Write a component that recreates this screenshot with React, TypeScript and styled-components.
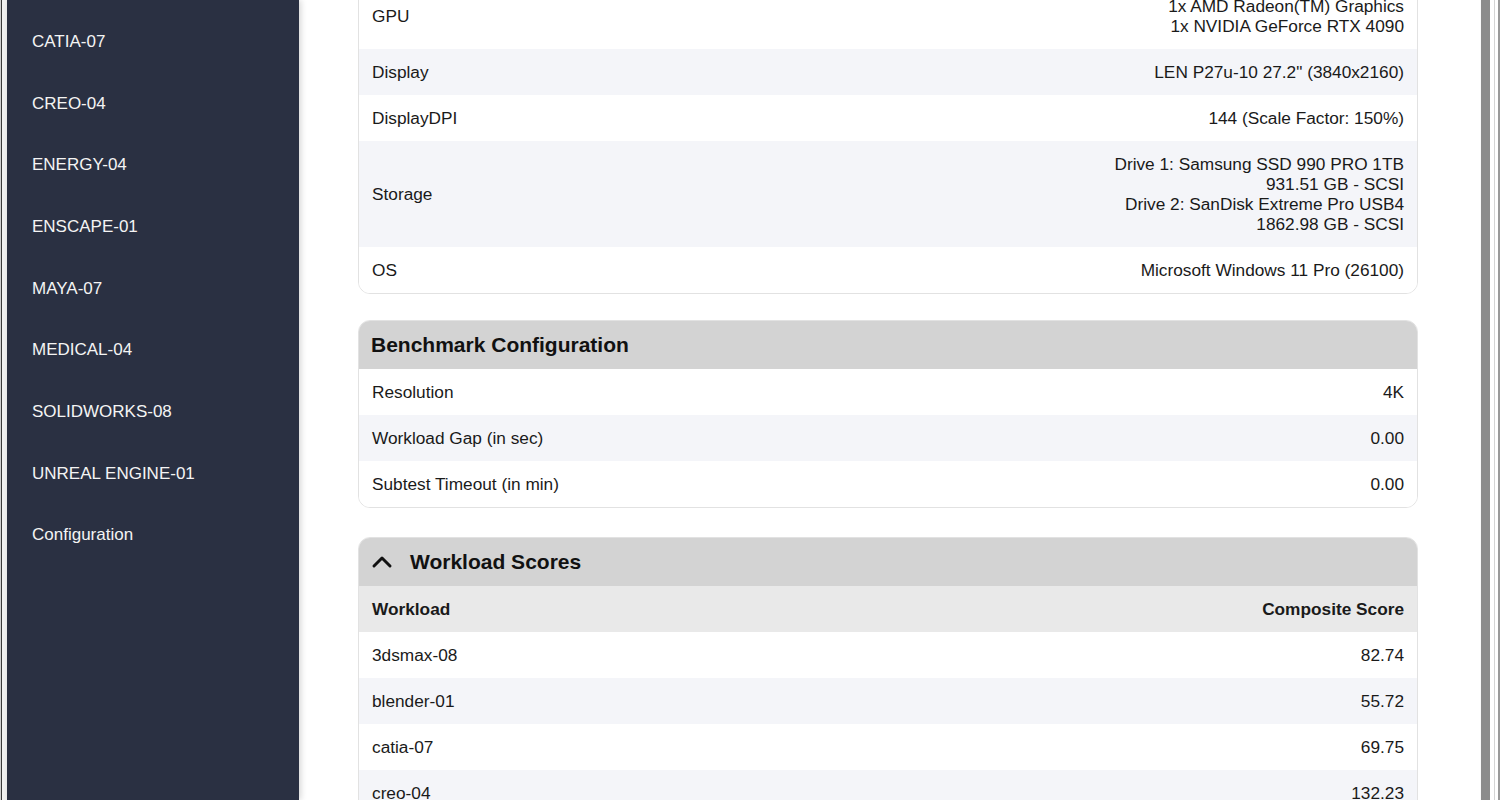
import React from 'react';
import styled, { createGlobalStyle } from 'styled-components';

const GlobalStyle = createGlobalStyle`
  html, body { margin: 0; padding: 0; height: 100%; overflow: hidden; background: #fff; }
  body { font-family: "Liberation Sans", Arial, sans-serif; color: #1f1f1f; }
  * { box-sizing: border-box; }
`;

const Frame = styled.div`
  display: flex;
  width: 1500px;
  height: 800px;
  overflow: hidden;
  background: #fff;
`;

const Strip = styled.div<{ $w: number; $c: string }>`
  flex: 0 0 ${p => p.$w}px;
  background: ${p => p.$c};
`;

const Sidebar = styled.nav`
  flex: 0 0 292px;
  background: #2a3042;
  padding-top: 11px;
  position: relative;
  z-index: 1;
  box-shadow: 2px 0 6px rgba(0, 0, 0, 0.16);
  display: flex;
  flex-direction: column;
`;

const NavItem = styled.div`
  height: 61.7px;
  flex: 0 0 auto;
  display: flex;
  align-items: center;
  padding-left: 25px;
  color: #f4f4f4;
  font-size: 17px;
`;

const Main = styled.main`
  flex: 1;
  overflow: hidden;
  background: #fff;
`;

const Content = styled.div`
  margin-top: -18px;
  padding: 0 62px 0 59px;
`;

const Card = styled.section<{ $gap?: number }>`
  border: 1px solid #e2e2e2;
  border-radius: 12px;
  overflow: hidden;
  margin-bottom: ${p => p.$gap ?? 26}px;
  background: #fff;
`;

const CardHeader = styled.div`
  height: 48px;
  background: #d3d3d3;
  display: flex;
  align-items: center;
  gap: 17px;
  padding: 0 13px 0 12px;
  font-size: 21px;
  font-weight: 700;
  color: #111;
`;

const Row = styled.div<{ $striped?: boolean; $head?: boolean }>`
  display: flex;
  justify-content: space-between;
  align-items: center;
  padding: 13px 13px;
  line-height: 20px;
  font-size: 17.25px;
  color: #1a1a1a;
  background: ${p => (p.$head ? '#e9e9e9' : p.$striped ? '#f4f5f9' : '#fff')};
  font-weight: ${p => (p.$head ? 700 : 400)};
`;

const Label = styled.div``;

const Value = styled.div`
  text-align: right;
`;

const Chevron = () => (
  <svg width="22" height="14" viewBox="0 0 22 14" aria-hidden="true">
    <path d="M3 11 L11 3 L19 11" fill="none" stroke="#111" strokeWidth="3" strokeLinecap="round" strokeLinejoin="round" />
  </svg>
);

const navItems = [
  'CATIA-07',
  'CREO-04',
  'ENERGY-04',
  'ENSCAPE-01',
  'MAYA-07',
  'MEDICAL-04',
  'SOLIDWORKS-08',
  'UNREAL ENGINE-01',
  'Configuration',
];

const systemRows: { label: string; value: string[] }[] = [
  { label: 'GPU', value: ['1x AMD Radeon(TM) Graphics', '1x NVIDIA GeForce RTX 4090'] },
  { label: 'Display', value: ['LEN P27u-10 27.2" (3840x2160)'] },
  { label: 'DisplayDPI', value: ['144 (Scale Factor: 150%)'] },
  {
    label: 'Storage',
    value: [
      'Drive 1: Samsung SSD 990 PRO 1TB',
      '931.51 GB - SCSI',
      'Drive 2: SanDisk Extreme Pro USB4',
      '1862.98 GB - SCSI',
    ],
  },
  { label: 'OS', value: ['Microsoft Windows 11 Pro (26100)'] },
];

const benchRows = [
  { label: 'Resolution', value: '4K' },
  { label: 'Workload Gap (in sec)', value: '0.00' },
  { label: 'Subtest Timeout (in min)', value: '0.00' },
];

const scores = [
  { name: '3dsmax-08', score: '82.74' },
  { name: 'blender-01', score: '55.72' },
  { name: 'catia-07', score: '69.75' },
  { name: 'creo-04', score: '132.23' },
];

export default function App() {
  return (
    <>
      <GlobalStyle />
      <Frame>
        <Strip $w={1} $c="#cfcfcf" />
        <Strip $w={1} $c="#3a3a3a" />
        <Strip $w={5} $c="#f2f2f2" />
        <Sidebar>
          {navItems.map(n => (
            <NavItem key={n}>{n}</NavItem>
          ))}
        </Sidebar>
        <Main>
          <Content>
            <Card>
              {systemRows.map((r, i) => (
                <Row key={r.label} $striped={i % 2 === 1}>
                  <Label>{r.label}</Label>
                  <Value>
                    {r.value.map(v => (
                      <div key={v}>{v}</div>
                    ))}
                  </Value>
                </Row>
              ))}
            </Card>
            <Card $gap={29}>
              <CardHeader>Benchmark Configuration</CardHeader>
              {benchRows.map((r, i) => (
                <Row key={r.label} $striped={i % 2 === 1}>
                  <Label>{r.label}</Label>
                  <Value>{r.value}</Value>
                </Row>
              ))}
            </Card>
            <Card>
              <CardHeader>
                <Chevron />
                Workload Scores
              </CardHeader>
              <Row $head>
                <Label>Workload</Label>
                <Value>Composite Score</Value>
              </Row>
              {scores.map((s, i) => (
                <Row key={s.name} $striped={i % 2 === 1}>
                  <Label>{s.name}</Label>
                  <Value>{s.score}</Value>
                </Row>
              ))}
            </Card>
          </Content>
        </Main>
        <Strip $w={1} $c="#fafafa" />
        <Strip $w={9} $c="#8c8c8c" />
        <Strip $w={4} $c="#ffffff" />
        <Strip $w={1} $c="#d4d4d4" />
        <Strip $w={3} $c="#ffffff" />
        <Strip $w={2} $c="#9a9a9a" />
      </Frame>
    </>
  );
}
